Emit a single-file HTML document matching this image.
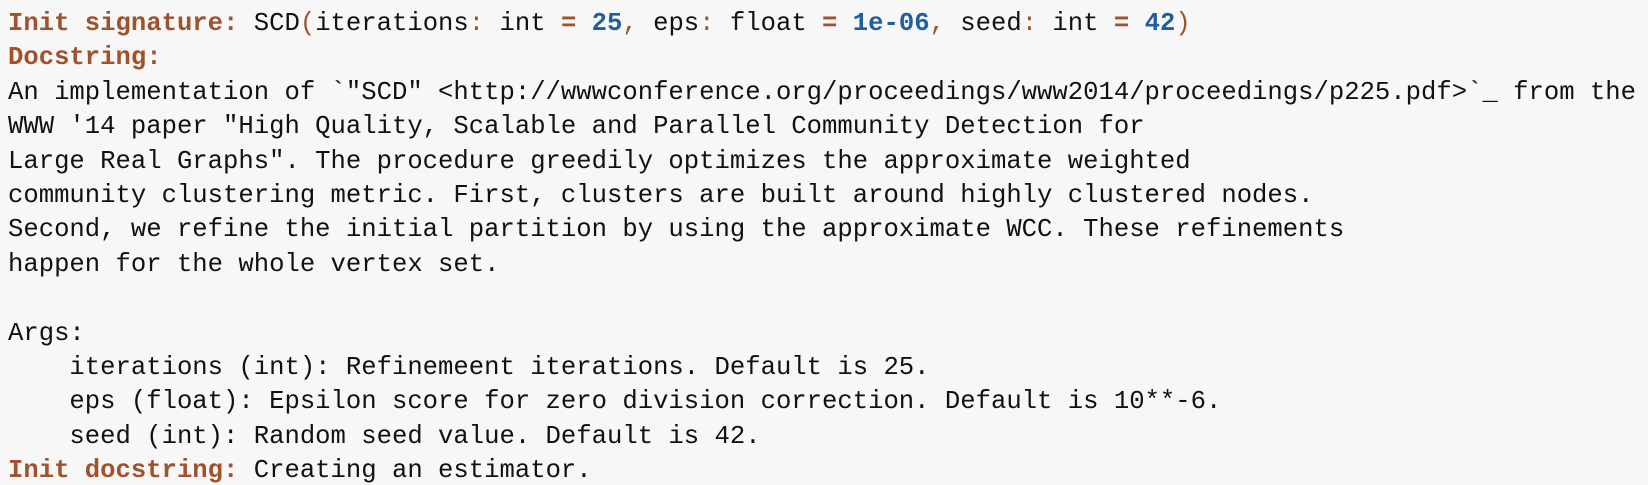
<!DOCTYPE html>
<html><head><meta charset="utf-8"><style>
html,body{margin:0;padding:0;background:#f7f7f7;width:1648px;height:485px;overflow:hidden}
pre{margin:0;padding:7px 0 0 8px;font-family:"Liberation Mono",monospace;font-size:25.6px;line-height:34.4px;color:#111}
.h{color:#a0522d;font-weight:bold}
.o{color:#a0522d}
.ob{color:#a0522d;font-weight:bold}
.n{color:#1f5fa0;font-weight:bold}
</style></head><body><pre><span class="h">Init signature:</span> SCD<span class="o">(</span>iterations<span class="o">:</span> int <span class="ob">=</span> <span class="n">25</span><span class="o">,</span> eps<span class="o">:</span> float <span class="ob">=</span> <span class="n">1e-06</span><span class="o">,</span> seed<span class="o">:</span> int <span class="ob">=</span> <span class="n">42</span><span class="o">)</span>
<span class="h">Docstring:</span>
An implementation of `"SCD" &lt;http://wwwconference.org/proceedings/www2014/proceedings/p225.pdf&gt;`_ from the
WWW '14 paper "High Quality, Scalable and Parallel Community Detection for
Large Real Graphs". The procedure greedily optimizes the approximate weighted
community clustering metric. First, clusters are built around highly clustered nodes.
Second, we refine the initial partition by using the approximate WCC. These refinements
happen for the whole vertex set.

Args:
    iterations (int): Refinemeent iterations. Default is 25.
    eps (float): Epsilon score for zero division correction. Default is 10**-6.
    seed (int): Random seed value. Default is 42.
<span class="h">Init docstring:</span> Creating an estimator.</pre></body></html>
